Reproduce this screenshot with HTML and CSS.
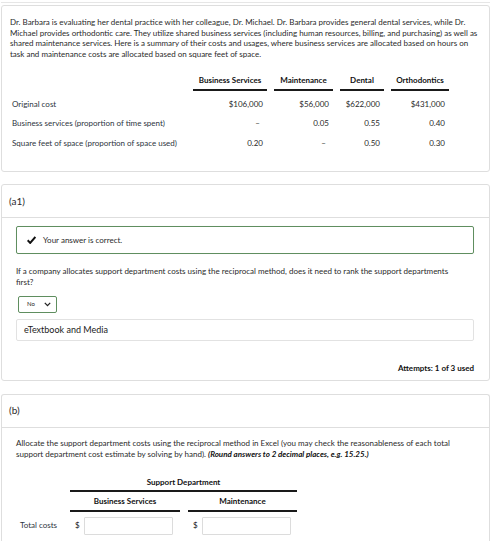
FILE: index.html
```html
<!DOCTYPE html>
<html>
<head>
<meta charset="utf-8">
<link rel="stylesheet" href="styles.css">
</head>
<body>
<div class="page">
  <div class="topline"></div>

  <section class="card intro">
    <p class="para">Dr. Barbara is evaluating her dental practice with her colleague, Dr. Michael. Dr. Barbara provides general dental services, while Dr. Michael provides orthodontic care. They utilize shared business services (including human resources, billing, and purchasing) as well as shared maintenance services. Here is a summary of their costs and usages, where business services are allocated based on hours on task and maintenance costs are allocated based on square feet of space.</p>
    <div class="dtable">
      <div class="lbl"></div>
      <div class="hd">Business Services</div>
      <div class="hd">Maintenance</div>
      <div class="hd">Dental</div>
      <div class="hd">Orthodontics</div>

      <div class="lbl">Original cost</div>
      <div class="num">$106,000</div>
      <div class="num">$56,000</div>
      <div class="num">$622,000</div>
      <div class="num">$431,000</div>

      <div class="lbl">Business services (proportion of time spent)</div>
      <div class="num dash">–</div>
      <div class="num">0.05</div>
      <div class="num">0.55</div>
      <div class="num">0.40</div>

      <div class="lbl">Square feet of space (proportion of space used)</div>
      <div class="num">0.20</div>
      <div class="num dash">–</div>
      <div class="num">0.50</div>
      <div class="num">0.30</div>
    </div>
  </section>

  <section class="card part a1">
    <div class="part-head">(a1)</div>
    <div class="part-body">
      <div class="correct">
        <svg class="check" width="9" height="8" viewBox="0 0 9 8"><path d="M0.6 4.3 L3.2 6.9 L8.4 0.9" fill="none" stroke="#111" stroke-width="2"/></svg>
        <span>Your answer is correct.</span>
      </div>
      <p class="question">If a company allocates support department costs using the reciprocal method, does it need to rank the support departments first?</p>
      <div class="select">
        <span>No</span>
        <svg width="7" height="5" viewBox="0 0 7 5"><path d="M0.8 0.9 L3.5 3.6 L6.2 0.9" fill="none" stroke="#222" stroke-width="1.3"/></svg>
      </div>
      <div class="etext">eTextbook and Media</div>
      <div class="attempts">Attempts: 1 of 3 used</div>
    </div>
  </section>

  <section class="card part b">
    <div class="part-head">(b)</div>
    <div class="part-body">
      <p class="question">Allocate the support department costs using the reciprocal method in Excel (you may check the reasonableness of each total support department cost estimate by solving by hand). <em>(Round answers to 2 decimal places, e.g. 15.25.)</em></p>
      <div class="atable">
        <div class="alabel"></div>
        <div class="ahead span2">Support Department</div>
        <div class="alabel"></div>
        <div class="ahead">Business Services</div>
        <div class="ahead">Maintenance</div>
        <div class="alabel total">Total costs</div>
        <div class="acell"><span class="cur">$</span><span class="input"></span></div>
        <div class="acell"><span class="cur">$</span><span class="input"></span></div>
      </div>
    </div>
  </section>
</div>
</body>
</html>
```
FILE: styles.css
```css
* { box-sizing: border-box; }
html, body { margin: 0; padding: 0; background: #fff; }
body {
  font-family: Lato, "Open Sans", sans-serif;
  color: #2a2a2a;
  font-size: 8px;
  line-height: 10.5px;
}
.page {
  width: 490px;
  padding: 2px 0 0 1px;
}
.topline {
  height: 1px;
  background: #e6e6e6;
  margin-bottom: 2px;
}
.card {
  border: 1px solid #dedede;
  border-radius: 3px;
  background: #fff;
  width: 489px;
}
.intro {
  padding: 11px 8px 18px 8px;
}
.para {
  margin: 0;
}
.dtable {
  display: grid;
  grid-template-columns: 174px 74px 59px 44px 58px;
  column-gap: 7px;
  margin: 16px 0 0 2px;
}
.dtable .hd {
  font-weight: 700;
  color: #111;
  text-align: center;
  white-space: nowrap;
  padding-bottom: 3px;
  border-bottom: 2px solid #1a1a1a;
  margin-bottom: 4px;
}
.dtable .lbl {
  padding: 4px 0 5px;
  color: #2c3440;
  white-space: nowrap;
}
.dtable .num {
  text-align: right;
  padding: 4px 4px 5px 0;
}
.dtable .num.dash { padding-right: 7px; }
.part { margin-top: 12px; }
.part.b { margin-top: 13px; border-bottom: none; border-radius: 3px 3px 0 0; }
.part-head {
  height: 33px;
  padding: 0 0 0 7px;
  display: flex;
  align-items: center;
  font-size: 10px;
  border-bottom: 1px solid #dedede;
}
.part-body {
  padding: 8px 15px 6px 14px;
}
.correct {
  height: 28px;
  border: 1px solid #5f8e5f;
  border-radius: 2px;
  display: flex;
  align-items: center;
  padding-left: 10px;
  gap: 7px;
  box-shadow: 0 0 1px rgba(0,0,0,0.1);
}
.check { display: block; }
.question {
  margin: 12px 0 0 0;
  line-height: 10.5px;
}
.a1 .question { max-width: 448px; }
.select {
  margin: 9px 0 0 2px;
  width: 39px;
  height: 17px;
  border: 1px solid #5f8e5f;
  border-radius: 2px;
  display: flex;
  align-items: center;
  justify-content: space-between;
  padding: 0 5px 0 8px;
  font-size: 6px;
}
.select svg { display: block; }
.etext {
  margin-top: 6px;
  height: 22px;
  border: 1px solid #e2e2e2;
  border-radius: 2px;
  display: flex;
  align-items: center;
  padding-left: 7px;
  font-size: 9px;
  color: #222;
}
.attempts {
  margin-top: 22px;
  text-align: right;
  font-weight: 700;
  color: #111;
  padding-bottom: 0;
}
.b .question { margin-top: 2px; line-height: 11px; }
.b em { font-weight: 700; font-style: italic; color: #111; }
.atable {
  display: grid;
  grid-template-columns: 44px 110px 109px;
  column-gap: 8px;
  margin-top: 17px;
  margin-left: 2px;
}
.ahead {
  font-weight: 700;
  color: #111;
  text-align: center;
  white-space: nowrap;
  padding-bottom: 3px;
  border-bottom: 2px solid #1a1a1a;
}
.ahead.span2 { grid-column: span 2; margin-bottom: 4px; }
.atable .ahead:not(.span2) { margin-bottom: 5px; }
.alabel.total {
  display: flex;
  align-items: center;
  padding-left: 2px;
  color: #2c3440;
  white-space: nowrap;
}
.acell {
  display: flex;
  align-items: center;
}
.cur {
  width: 14px;
  padding-left: 5px;
  color: #111;
}
.input {
  width: 89px;
  height: 18px;
  border: 1.5px solid #dcdcdc;
  border-radius: 1px;
  background: #fff;
}
```
